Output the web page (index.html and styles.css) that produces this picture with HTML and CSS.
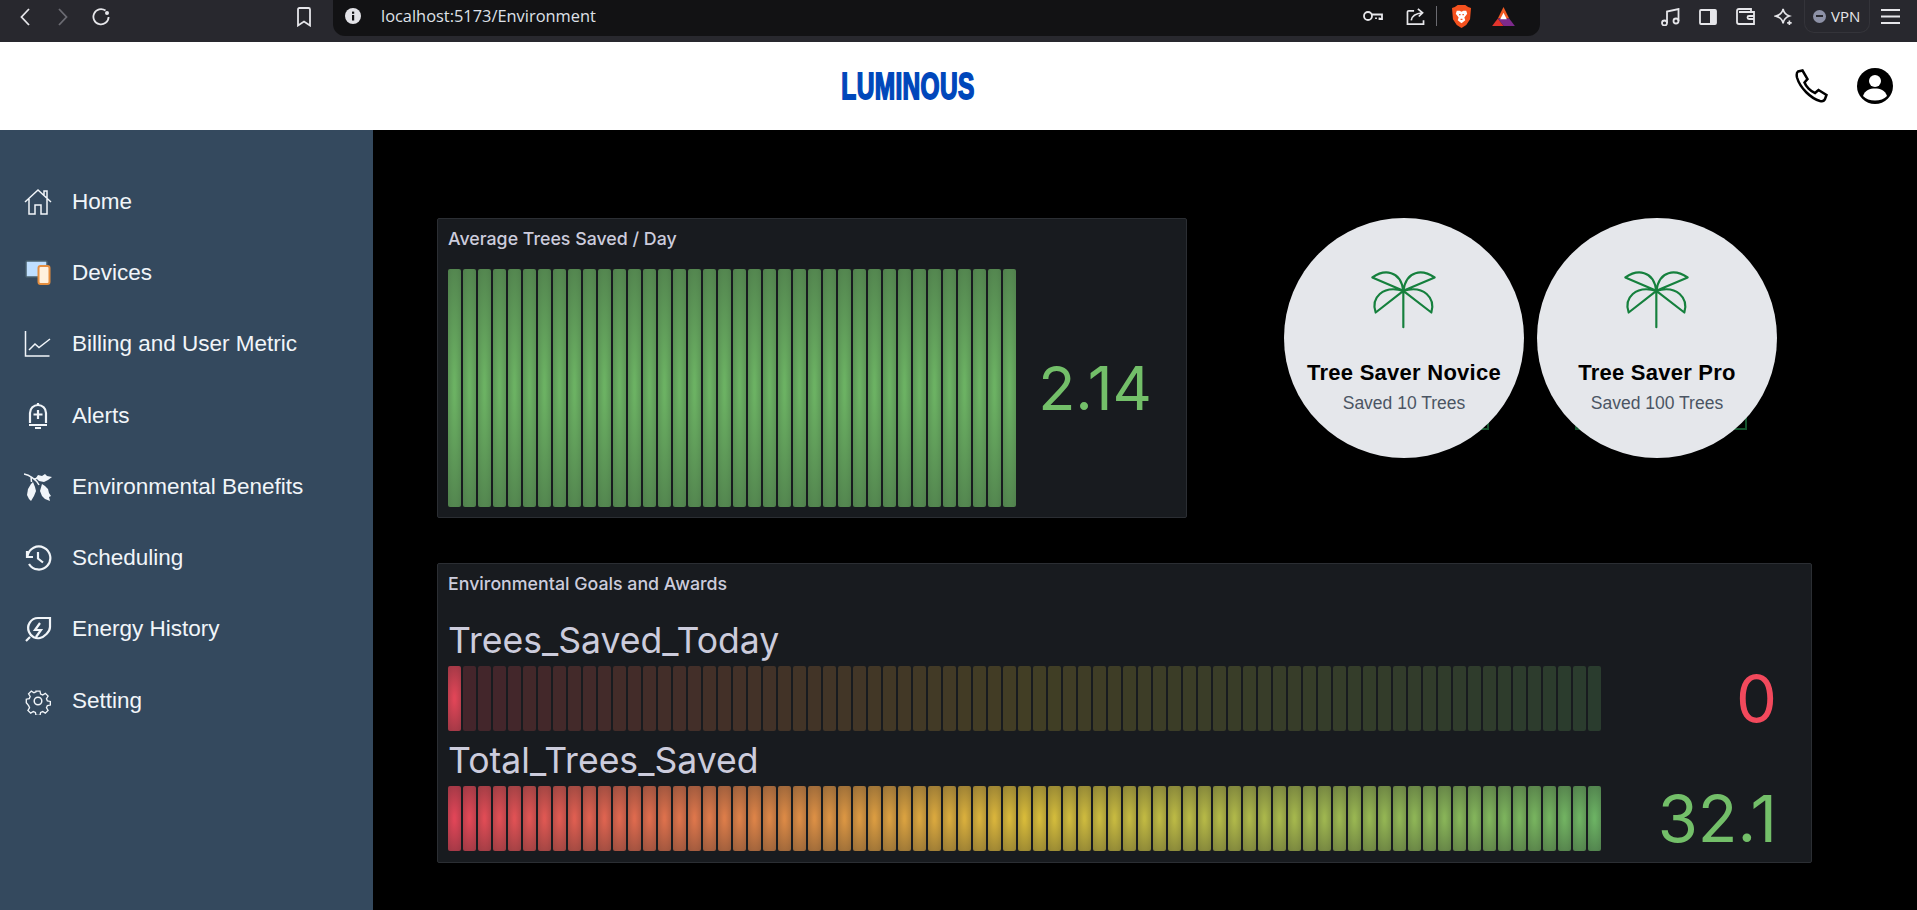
FILE: index.html
```html
<!DOCTYPE html>
<html lang="en">
<head>
<meta charset="utf-8">
<title>Environment</title>
<link rel="stylesheet" href="styles.css">
</head>
<body>
<div class="chrome">
  <div class="chrome-nav">
    <svg class="ci w10" viewBox="0 0 10 18"><path d="M9 1 1.500 9 9 17"/></svg>
    <svg class="ci w10 dim gap-28" viewBox="0 0 10 18"><path d="M1 1 8.500 9 1 17"/></svg>
    <svg class="ci w18 gap-24" viewBox="0 0 18 18"><path d="M13.500 2.600A7.600 7.600 0 1 0 16.600 9"/><circle class="solid" cx="15" cy="5" r="2"/></svg>
    <svg class="ci w14 push" viewBox="0 0 14 20"><path d="M1 2.500Q1 1 2.500 1h9Q13 1 13 2.500V18.500L7 14.500 1 18.500Z"/></svg>
  </div>
  <div class="urlbar">
    <svg class="info" viewBox="0 0 16 16"><circle cx="8" cy="8" r="8" fill="#e3e3e8"/><rect x="7" y="7" width="2.200" height="5.500" fill="#121214"/><rect x="7" y="3.600" width="2.200" height="2.200" fill="#121214"/></svg>
    <span class="url">localhost:5173/Environment</span>
    <div class="url-tools">
      <svg class="ci w20" viewBox="0 0 20 12"><circle cx="5" cy="6" r="4"/><path d="M9 4.500h10v4.500h-2.500V7.500M13 7.500V9"/></svg>
      <svg class="ci w19 gap-23" viewBox="0 0 19 18"><path d="M8 3H2.500Q1 3 1 4.500V17h17v-4"/><path d="M5 13Q6 6 17 5M12 1l5 4-4 4"/></svg>
      <span class="url-divider"></span>
      <svg class="lion" viewBox="0 0 20 24"><path d="M3 2 6 0h8l3 2 3 1-1 12-4 6-5 3-5-3-4-6L0 3Z" fill="#f4511e"/><path d="M5 6h3l2 1 2-1h3l1 3-3 4 1 3-4 3-4-3 1-3-3-4Z" fill="#fff"/><path d="M7.500 10h1.500M11 10h1.500M9 15h2" stroke="#f4511e" stroke-width="1.300"/></svg>
      <svg class="bat" viewBox="0 0 24 20"><path d="M12 0 18 12H6Z" fill="#f15a22"/><path d="M6 12h12l6 8H12Z" fill="#7d2a8c"/><path d="M6 12l6 8H0Z" fill="#e2342c"/><path d="M12 6l3.500 7h-7Z" fill="#fff"/></svg>
    </div>
  </div>
  <div class="chrome-tools">
    <svg class="ci w20" viewBox="0 0 20 18"><circle cx="3.500" cy="15" r="2.500"/><circle cx="15" cy="13" r="2.500"/><path d="M6 15V3.500L17.500 1v12"/></svg>
    <svg class="ci w18 gap-18" viewBox="0 0 18 16"><rect x="1" y="1" width="16" height="14" rx="1"/><rect class="solid" x="11" y="1" width="6" height="14"/></svg>
    <svg class="ci w19 gap-19" viewBox="0 0 19 17"><path d="M15 4V1H3Q1 1 1 3v11q0 2 2 2h15V4H3"/><path d="M18 8h-5q-1.500 0-1.500 1.500T13 11h5"/></svg>
    <svg class="ci w20 gap-19" viewBox="0 0 20 20"><path d="M9 1q1 6 7 8-6 2-7 8-1-6-8-8 7-2 8-8Z"/><path d="M16 14v5M13.500 16.500h5"/></svg>
    <div class="vpn"><span class="vpn-dot"></span><span class="vpn-text">VPN</span></div>
    <svg class="ci w19 gap-11" viewBox="0 0 19 15"><path d="M0 1h19M0 7.500h19M0 14h19"/></svg>
  </div>
</div>

<header class="topbar">
  <div class="logo">LUMINOUS</div>
  <div class="top-actions">
    <svg class="phone" viewBox="0 0 34 34"><path d="M4 2.500 8.500 1.500l5 8.500-3 3.500c1.500 4 6 9 10.500 10.500l3.500-3 8 5-1.500 4c-.800 2-3 2.500-5 2-9-2.500-20-13-23-23.500C2.500 6 2.500 3.500 4 2.500Z"/></svg>
    <svg class="profile" viewBox="0 0 36 36"><circle cx="18" cy="18" r="18" fill="#000"/><circle cx="18" cy="13" r="6" fill="#fff"/><path d="M6 28c2-6 7-7.500 12-7.500S28 22 30 28c-3 3-7 4.500-12 4.500S9 31 6 28Z" fill="#fff"/></svg>
  </div>
</header>

<div class="layout">
  <nav class="sidebar">
    <a class="nav-item">
      <svg class="nav-icon" viewBox="0 0 28 28"><path d="M1 14 14 2l13 12M5 11v15h6v-9h6v9h6V11M20 7V3h3v7"/></svg>
      <span>Home</span>
    </a>
    <a class="nav-item">
      <svg class="nav-icon" viewBox="0 0 28 28"><rect x="2" y="2" width="21" height="16" rx="1" fill="#bfdfff" stroke="#48606e" stroke-width="1.500"/><rect x="14.500" y="7" width="11" height="18" rx="2" fill="#fff1de" stroke="#e58e3f" stroke-width="2"/></svg>
      <span>Devices</span>
    </a>
    <a class="nav-item">
      <svg class="nav-icon" viewBox="0 0 28 28"><path d="M1.500 1v25h24M5 20l6-6 4 3.500L26 9"/></svg>
      <span>Billing and User Metric</span>
    </a>
    <a class="nav-item">
      <svg class="nav-icon thick" viewBox="0 0 28 28"><path d="M6 21V11a8 8 0 0 1 16 0v10M5 23h18M14 1v2M14 8v9M9.500 12.500h9M11 26h6"/></svg>
      <span>Alerts</span>
    </a>
    <a class="nav-item">
      <svg class="nav-icon fill" viewBox="0 0 28 28"><path d="M0 1C5 2 12 6 15 12M7 4 7.500 9M10 6 15 5" fill="none" stroke="#f1f5f9" stroke-width="1.500"/><path d="M12 5 14 2 18 3 21 1 23 3 28 4 24 7 20 9 15 8Z"/><path d="M7 11 9 9 11 14 12 18 10 23 7 28 5 26 3 22 4 16Z"/><path d="M18 11 21 13 24 16 25 20 27 23 25 24 26 28 21 26 18 23 16 18Z"/></svg>
      <span>Environmental Benefits</span>
    </a>
    <a class="nav-item">
      <svg class="nav-icon thick" viewBox="0 0 28 28"><path d="M3 7v6h6M3.500 12A11.500 11.500 0 1 1 5 20M14 8v6.500l5 4"/></svg>
      <span>Scheduling</span>
    </a>
    <a class="nav-item">
      <svg class="nav-icon thick" viewBox="0 0 28 28"><path d="M26 3H14a10 10 0 0 0-9 14c2 5 7 7 11 6s10-6 10-11ZM2 26l4-4M16 8l-5 7h6l-5 7"/></svg>
      <span>Energy History</span>
    </a>
    <a class="nav-item">
      <svg class="nav-icon" viewBox="0 0 28 28"><circle cx="14" cy="14" r="3.800"/><path d="M11.800 3h4.400l.7 3.300 2.300 1 2.900-1.800 3.100 3.100-1.800 2.900 1 2.300 3.300.7v4l-3.300.7-1 2.300 1.800 2.900-3.100 3.100-2.900-1.800-2.300 1-.7 3.300h-4.400l-.7-3.300-2.300-1-2.900 1.800-3.100-3.100 1.800-2.900-1-2.300L1 16v-4l3.300-.7 1-2.300-1.800-2.900 3.100-3.100 2.900 1.800 2.300-1Z" transform="translate(1.400 1.400) scale(.9)"/></svg>
      <span>Setting</span>
    </a>
  </nav>

  <main class="content">
    <section class="row-top">
      <div class="panel panel-avg">
        <h2 class="panel-title">Average Trees Saved / Day</h2>
        <div class="avg-body">
          <div class="cells cells-tall" data-count="38" data-lit="38" data-scheme="green"></div>
          <div class="value value-avg">2.14</div>
        </div>
      </div>
      <div class="badges">
        <div class="badge badge-novice">
          <div class="badge-circle">
            <svg class="palm" viewBox="300 175 210 185"><path d="M403 243 310 203C345 178 395 180 403 243M403 243 497 203C460 178 412 180 403 243M403 243 320 308C305 265 340 225 403 243M403 243 487 308C500 265 465 225 403 243M403 243V352"/></svg>
            <div class="badge-title">Tree Saver Novice</div>
            <div class="badge-sub">Saved 10 Trees</div>
          </div>
        </div>
        <div class="badge badge-pro">
          <div class="badge-circle">
            <svg class="palm" viewBox="300 175 210 185"><path d="M403 243 310 203C345 178 395 180 403 243M403 243 497 203C460 178 412 180 403 243M403 243 320 308C305 265 340 225 403 243M403 243 487 308C500 265 465 225 403 243M403 243V352"/></svg>
            <div class="badge-title">Tree Saver Pro</div>
            <div class="badge-sub">Saved 100 Trees</div>
          </div>
        </div>
      </div>
    </section>

    <section class="panel panel-goals">
      <h2 class="panel-title">Environmental Goals and Awards</h2>
      <div class="gauges">
        <div class="gauge">
          <div class="gauge-label">Trees_Saved_Today</div>
          <div class="cells cells-short" data-count="77" data-lit="1" data-scheme="rdylgr"></div>
          <div class="value value-red">0</div>
        </div>
        <div class="gauge">
          <div class="gauge-label">Total_Trees_Saved</div>
          <div class="cells cells-short" data-count="77" data-lit="77" data-scheme="rdylgr"></div>
          <div class="value value-green">32.1</div>
        </div>
      </div>
    </section>
  </main>
</div>
<script src="app.js"></script>
</body>
</html>
```

FILE: styles.css
```css
* { box-sizing: border-box; }
html, body { margin: 0; height: 100%; }
body {
  width: 1917px;
  height: 910px;
  overflow: hidden;
  background: #000;
  font-family: "Liberation Sans", Arial, sans-serif;
  display: flex;
  flex-direction: column;
}

/* browser chrome */
.chrome { height: 42px; flex: none; background: #28282e; display: flex; align-items: flex-start; }
.chrome-nav { width: 333px; height: 33px; padding-left: 20px; display: flex; align-items: center; flex: none; }
.ci { fill: none; stroke: #e6e6ea; stroke-width: 1.800; flex: none; }
.ci .solid { fill: #e6e6ea; stroke: none; }
.ci.dim { stroke: #6b6b72; }
.w10 { width: 10px; height: 18px; }
.w14 { width: 14px; height: 20px; }
.w18 { width: 18px; height: 18px; }
.w19 { width: 19px; height: 17px; }
.w20 { width: 20px; height: 18px; }
.gap-11 { margin-left: 11px; }
.gap-18 { margin-left: 18px; }
.gap-19 { margin-left: 19px; }
.gap-23 { margin-left: 23px; }
.gap-24 { margin-left: 24px; }
.gap-28 { margin-left: 28px; }
.push { margin-left: auto; margin-right: 22px; }
.urlbar { width: 1207px; height: 36px; flex: none; background: #121214; border-radius: 0 0 12px 12px; display: flex; align-items: center; padding: 0 25px 4px 12px; }
.info { width: 16px; height: 16px; flex: none; }
.url { margin-left: 20px; font-family: "Open Sans", sans-serif; font-size: 16.400px; line-height: 20px; color: #dfe1e8; }
.url-tools { margin-left: auto; display: flex; align-items: center; }
.url-divider { width: 1px; height: 20px; background: #6a6a70; margin: 0 15px 0 11px; }
.lion { width: 19px; height: 23px; }
.bat { width: 23px; height: 19px; margin-left: 21px; }
.chrome-tools { flex: 1; height: 33px; display: flex; align-items: center; padding-left: 121px; }
.vpn { width: 66px; height: 33px; margin-left: 10px; border: 1px solid #34343a; border-top: 0; border-radius: 0 0 10px 10px; display: flex; align-items: center; padding-left: 8px; gap: 5px; flex: none; }
.vpn-dot { width: 13px; height: 13px; border-radius: 50%; background: #8d91a6; position: relative; }
.vpn-dot::after { content: ""; position: absolute; left: 3px; right: 3px; top: 5.500px; height: 2px; background: #28282e; }
.vpn-text { font-family: "Open Sans", sans-serif; font-size: 15px; color: #e6e6ea; }

/* app header */
.topbar { height: 88px; flex: none; background: #fff; display: flex; align-items: center; justify-content: center; position: relative; }
.logo { font-family: "Liberation Sans", sans-serif; font-weight: 700; font-size: 36px; line-height: 1; color: #0047bb; -webkit-text-stroke: 1.800px #0047bb; margin-right: 102px; transform: translateY(1px) scaleX(.68); letter-spacing: .5px; }
.top-actions { position: absolute; right: 24px; top: 0; bottom: 0; display: flex; align-items: center; gap: 29px; }
.phone { width: 34px; height: 34px; fill: none; stroke: #000; stroke-width: 2.500; }
.profile { width: 36px; height: 36px; }

/* layout */
.layout { flex: 1; display: flex; min-height: 0; }
.sidebar { width: 373px; flex: none; background: #34495e; padding-top: 36px; display: flex; flex-direction: column; }
.nav-item { height: 71.300px; display: flex; align-items: center; gap: 20px; padding-left: 24px; font-size: 22.500px; color: #f1f5f9; }
.nav-icon { width: 28px; height: 28px; fill: none; stroke: #f1f5f9; stroke-width: 1.500; flex: none; }
.nav-icon.fill { fill: #f1f5f9; stroke: none; }
.nav-icon.thick { stroke-width: 2.200; }

.content { flex: 1; padding: 88px 0 0 64px; font-family: Inter, sans-serif; }
.row-top { display: flex; }
.panel { background: #181b1f; border: 1px solid #2b2e33; border-radius: 2px; }
.panel-title { margin: 0; padding: 10px 0 0 10px; font-size: 17.800px; line-height: 20px; font-weight: 500; color: #ccccdc; }
.panel-avg { width: 750px; height: 300px; }
.avg-body { display: flex; align-items: center; padding: 20px 0 0 10px; }
.panel-goals { width: 1375px; height: 300px; margin-top: 45px; }
.cells { display: flex; gap: 2px; }
.cells-tall { height: 238px; flex: none; }
.cells-short { height: 65px; }
.cell { width: 13px; height: 100%; border-radius: 2px; flex: none; background: radial-gradient(ellipse 120% 75% at center, color-mix(in srgb, var(--c) 92%, #181b1f) 5%, color-mix(in srgb, var(--c) 52%, #181b1f)); }
.cell.off { background: color-mix(in srgb, var(--c) 20%, #181b1f); }
.value { font-size: 64px; line-height: 1; font-weight: 400; }
.value-avg { flex: 1; text-align: center; color: #73bf69; font-size: 61px; padding-right: 12px; }
.value-red { color: #f2495c; }
.value-green { color: #73bf69; }

.gauges { padding: 17px 0 0 10px; }
.gauge { display: grid; grid-template-columns: 1153px 1fr; grid-template-rows: 55px 65px; align-items: center; }
.gauge-label { grid-column: 1 / 3; font-size: 35.600px; line-height: 40px; color: #ccccdc; align-self: end; padding-bottom: 5px; }
.gauge .value { font-size: 65px; text-align: right; padding-right: 34px; }

/* award badges */
.badges { display: flex; gap: 13px; margin-left: 97px; font-family: "Liberation Sans", Arial, sans-serif; }
.badge { position: relative; width: 240px; height: 240px; }
.badge::before { content: ""; position: absolute; bottom: 28px; height: 30px; border: 2px solid #14532d; }
.badge-novice::before { left: 46px; width: 155px; }
.badge-pro::before { left: 38px; width: 168px; }
.badge-circle { position: relative; width: 240px; height: 240px; border-radius: 50%; background: #e5e7eb; display: flex; flex-direction: column; align-items: center; padding-top: 50px; }
.palm { width: 70px; height: 62px; fill: none; stroke: #15803d; stroke-width: 6.500; stroke-linejoin: round; stroke-linecap: round; flex: none; }
.badge-title { margin-top: 29px; font-size: 22px; line-height: 28px; font-weight: 700; color: #000; letter-spacing: .25px; }
.badge-sub { margin-top: 4px; font-size: 17.500px; line-height: 24px; color: #4b5563; }
```

FILE: app.js
```js
var RED = [242, 73, 92];
var YELLOW = [232, 200, 60];
var GREEN = [115, 191, 105];

function mix(a, b, t) {
  return a.map(function (v, i) { return Math.round(v + (b[i] - v) * t); });
}

function colorAt(scheme, t) {
  if (scheme === 'green') return GREEN;
  return t < 0.5 ? mix(RED, YELLOW, t * 2) : mix(YELLOW, GREEN, (t - 0.5) * 2);
}

document.querySelectorAll('.cells').forEach(function (gauge) {
  var count = Number(gauge.dataset.count);
  var lit = Number(gauge.dataset.lit);
  for (var i = 0; i < count; i++) {
    var cell = document.createElement('span');
    cell.className = i < lit ? 'cell' : 'cell off';
    var c = colorAt(gauge.dataset.scheme, i / (count - 1));
    cell.style.setProperty('--c', 'rgb(' + c.join(',') + ')');
    gauge.appendChild(cell);
  }
});
```
